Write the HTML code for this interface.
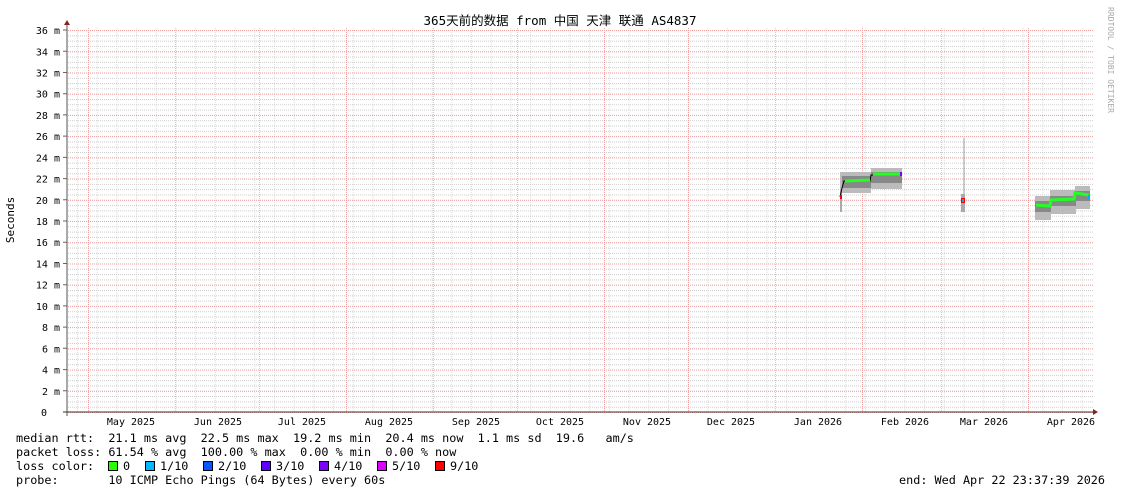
<!DOCTYPE html>
<html><head><meta charset="utf-8"><style>
body{margin:0;background:#fff;}
svg text{font-family:"DejaVu Sans Mono","Liberation Mono","Noto Sans CJK SC",monospace;font-size:10px;fill:#000;white-space:pre}
svg text.lg{font-size:11.8px}
svg text.tt{font-size:12.5px}
svg text.yl{font-size:11px}
svg text.wm{font-size:8px;fill:#aaa}
</style></head><body>
<svg width="1121" height="494" xmlns="http://www.w3.org/2000/svg">
<defs>
<pattern id="hm" patternUnits="userSpaceOnUse" x="0" y="412" width="2" height="5.305"><rect x="0" y="0" width="1" height="1" fill="#ccc"/></pattern>
<pattern id="hM" patternUnits="userSpaceOnUse" x="0" y="412" width="2" height="21.22"><rect x="0" y="0" width="1" height="1" fill="#f0a0a0"/></pattern>
<pattern id="vm" patternUnits="userSpaceOnUse" x="77" y="0" width="19.7" height="2"><rect x="0" y="0" width="1" height="1" fill="#ddd"/></pattern>
<pattern id="vd" patternUnits="userSpaceOnUse" x="0" y="0" width="1" height="2"><rect x="0" y="0" width="1" height="1" fill="#ccc"/></pattern>
<pattern id="vr" patternUnits="userSpaceOnUse" x="0" y="0" width="1" height="2"><rect x="0" y="0" width="1" height="1" fill="#f0a0a0"/></pattern>
</defs>
<rect width="1121" height="494" fill="#fff"/>
<rect x="67" y="28" width="1026" height="385" fill="url(#vm)"/>
<rect x="67" y="28" width="1026" height="385" fill="url(#hm)"/>
<g fill="url(#vd)">
<rect x="175" y="28" width="1" height="384"/><rect x="259" y="28" width="1" height="384"/><rect x="433" y="28" width="1" height="384"/><rect x="517" y="28" width="1" height="384"/><rect x="775" y="28" width="1" height="384"/><rect x="941" y="28" width="1" height="384"/>
</g>
<rect x="67" y="28" width="1026" height="385" fill="url(#hM)"/>
<g fill="url(#vr)">
<rect x="88" y="28" width="1" height="384"/><rect x="346" y="28" width="1" height="384"/><rect x="604" y="28" width="1" height="384"/><rect x="688" y="28" width="1" height="384"/><rect x="862" y="28" width="1" height="384"/><rect x="1028" y="28" width="1" height="384"/>
</g>
<g text-anchor="end">
<text x="47" y="416">0</text>
<text x="60" y="395">2 m</text><text x="60" y="373.6">4 m</text><text x="60" y="352.3">6 m</text><text x="60" y="331.1">8 m</text>
<text x="60" y="309.9">10 m</text><text x="60" y="288.7">12 m</text><text x="60" y="267.5">14 m</text><text x="60" y="246.2">16 m</text>
<text x="60" y="225">18 m</text><text x="60" y="203.8">20 m</text><text x="60" y="182.6">22 m</text><text x="60" y="161.4">24 m</text>
<text x="60" y="140.1">26 m</text><text x="60" y="118.9">28 m</text><text x="60" y="97.7">30 m</text><text x="60" y="76.5">32 m</text>
<text x="60" y="55.3">34 m</text><text x="60" y="34">36 m</text>
</g>
<path d="M63 412H67M63 390.8H67M63 369.6H67M63 348.3H67M63 327.1H67M63 305.9H67M63 284.7H67M63 263.5H67M63 242.2H67M63 221H67M63 199.8H67M63 178.6H67M63 157.4H67M63 136.1H67M63 114.9H67M63 93.7H67M63 72.5H67M63 51.3H67M63 30H67" stroke="#666"/>
<!-- data -->
<rect x="840" y="172" width="31" height="21" fill="#bbb"/>
<rect x="842" y="176" width="29" height="12" fill="#888"/>
<rect x="871" y="168" width="31" height="21" fill="#bbb"/>
<rect x="871" y="172" width="31" height="11" fill="#888"/>
<rect x="840" y="190" width="2" height="22" fill="#aaa"/>
<polyline points="840,197 842,188 844,181 870,181 871,175 901,174" fill="none" stroke="#000" stroke-width="1"/>
<polyline points="845,181 870,180" stroke="#2f2" stroke-width="3"/>
<polyline points="873,174 900,174" stroke="#2f2" stroke-width="3"/>
<rect x="840" y="195" width="2" height="4" fill="#f00"/>
<rect x="900" y="172" width="2" height="4" fill="#70f"/>
<line x1="964" y1="138" x2="964" y2="212" stroke="#999"/>
<rect x="961" y="194" width="4" height="18" fill="#aaa"/>
<rect x="961" y="198" width="4" height="5" fill="#f00"/>
<rect x="962" y="199" width="2" height="3" fill="#0af"/>
<rect x="1035" y="196" width="16" height="24" fill="#bbb"/>
<rect x="1050" y="190" width="26" height="24" fill="#bbb"/>
<rect x="1075" y="186" width="15" height="23" fill="#bbb"/>
<rect x="1035" y="201" width="16" height="11" fill="#888"/>
<rect x="1050" y="196" width="26" height="10" fill="#888"/>
<rect x="1075" y="191" width="15" height="10" fill="#888"/>
<polyline points="1036,205 1050,206 1051,200 1074,199 1075,193 1089,195" fill="none" stroke="#2f2" stroke-width="3"/>
<rect x="1088" y="195" width="2" height="4" fill="#0af"/>
<!-- axes -->
<line x1="67" y1="24" x2="67" y2="416" stroke="#555"/>
<polygon points="64,25 70,25 67,20" fill="#822"/>
<line x1="63" y1="412" x2="1095" y2="412" stroke="#333"/>
<polygon points="1093,409 1093,415 1098,412" fill="#822"/>
<text class="tt" x="560" y="25" text-anchor="middle">365天前的数据 from 中国 天津 联通 AS4837</text>
<text class="yl" x="14" y="220" text-anchor="middle" transform="rotate(-90 14 220)">Seconds</text>
<text class="wm" x="1108" y="60" text-anchor="middle" transform="rotate(90 1108 60)">RRDTOOL / TOBI OETIKER</text>
<g text-anchor="middle">
<text x="131" y="425">May 2025</text>
<text x="218" y="425">Jun 2025</text>
<text x="302" y="425">Jul 2025</text>
<text x="389" y="425">Aug 2025</text>
<text x="476" y="425">Sep 2025</text>
<text x="560" y="425">Oct 2025</text>
<text x="647" y="425">Nov 2025</text>
<text x="731" y="425">Dec 2025</text>
<text x="818" y="425">Jan 2026</text>
<text x="905" y="425">Feb 2026</text>
<text x="984" y="425">Mar 2026</text>
<text x="1071" y="425">Apr 2026</text>
</g>
<text class="lg" x="16" y="442">median rtt:  21.1 ms avg  22.5 ms max  19.2 ms min  20.4 ms now  1.1 ms sd  19.6   am/s</text>
<text class="lg" x="16" y="456">packet loss: 61.54 % avg  100.00 % max  0.00 % min  0.00 % now</text>
<text class="lg" x="16" y="470">loss color:</text>
<text class="lg" x="16" y="484">probe:       10 ICMP Echo Pings (64 Bytes) every 60s</text>
<text class="lg" x="1105" y="484" text-anchor="end">end: Wed Apr 22 23:37:39 2026</text>
<g stroke="#000" stroke-width="1">
<rect x="108.5" y="461.5" width="9" height="9" fill="#26ff00"/>
<rect x="145.5" y="461.5" width="9" height="9" fill="#00b8ff"/>
<rect x="203.5" y="461.5" width="9" height="9" fill="#0059ff"/>
<rect x="261.5" y="461.5" width="9" height="9" fill="#5e00ff"/>
<rect x="319.5" y="461.5" width="9" height="9" fill="#7e00ff"/>
<rect x="377.5" y="461.5" width="9" height="9" fill="#dd00ff"/>
<rect x="435.5" y="461.5" width="9" height="9" fill="#ff0000"/>
</g>
<text class="lg" x="123" y="470">0</text><text class="lg" x="160" y="470">1/10</text><text class="lg" x="218" y="470">2/10</text><text class="lg" x="276" y="470">3/10</text><text class="lg" x="334" y="470">4/10</text><text class="lg" x="392" y="470">5/10</text><text class="lg" x="450" y="470">9/10</text>
</svg>
</body></html>
